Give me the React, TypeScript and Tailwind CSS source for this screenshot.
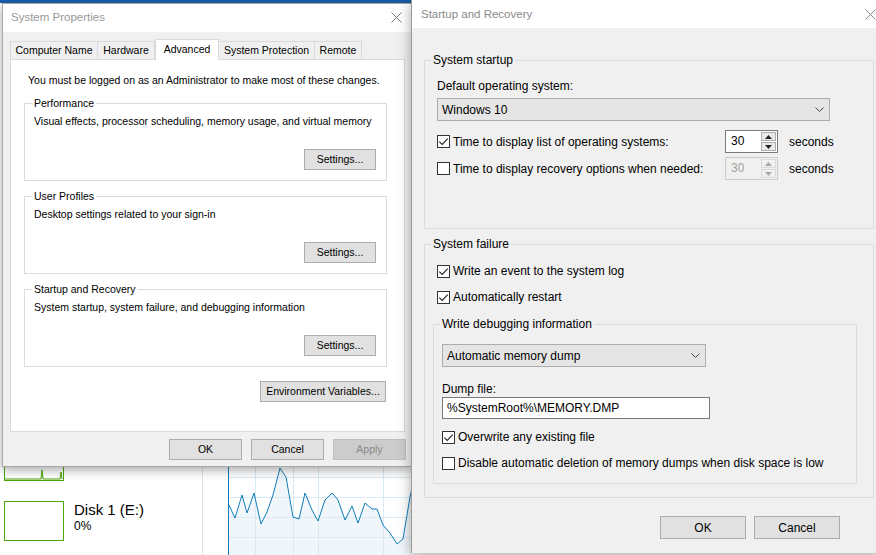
import type { ReactNode } from 'react'

function XIcon({ color = '#777777' }: { color?: string }) {
  return (
    <svg width="11" height="11" viewBox="0 0 11 11">
      <path d="M0.5 0.5 10.5 10.5 M10.5 0.5 0.5 10.5" stroke={color} strokeWidth="1" fill="none" />
    </svg>
  )
}

function Chevron() {
  return (
    <svg width="9" height="5" viewBox="0 0 9 5">
      <path d="M0.5 0.5 4.5 4.5 8.5 0.5" stroke="#444444" strokeWidth="1" fill="none" />
    </svg>
  )
}

function Btn({
  children,
  className = '',
  disabled = false,
}: {
  children: ReactNode
  className?: string
  disabled?: boolean
}) {
  return (
    <button
      type="button"
      className={`flex items-center justify-center border ${
        disabled ? 'border-[#bfbfbf] bg-[#cccccc] text-[#8a8a8a]' : 'border-[#adadad] bg-[#e1e1e1] text-black'
      } ${className}`}
    >
      {children}
    </button>
  )
}

function Check({ checked }: { checked: boolean }) {
  return (
    <span className="flex h-[13px] w-[13px] shrink-0 items-center justify-center border border-[#333333] bg-white">
      {checked && (
        <svg width="11" height="11" viewBox="0 0 11 11">
          <path d="M1.3 5.6 4.2 8.5 9.7 2.6" fill="none" stroke="#222222" strokeWidth="1.1" />
        </svg>
      )}
    </span>
  )
}

function CheckRow({ checked, children, className = '' }: { checked: boolean; children: ReactNode; className?: string }) {
  return (
    <div className={`flex h-[16px] items-center gap-[3px] ${className}`}>
      <Check checked={checked} />
      <span>{children}</span>
    </div>
  )
}

function SpinArrow({ up, color }: { up: boolean; color: string }) {
  return (
    <svg width="7" height="4" viewBox="0 0 7 4">
      <path d={up ? 'M0 4 3.5 0 7 4Z' : 'M0 0 3.5 4 7 0Z'} fill={color} />
    </svg>
  )
}

function Spinner({ disabled = false }: { disabled?: boolean }) {
  const half = disabled
    ? 'border-[#d9d9d9] bg-[#f0f0f0]'
    : 'border-[#adadad] bg-[#e9e9e9]'
  const arrow = disabled ? '#a8a8a8' : '#222222'
  return (
    <div
      className={`flex h-[23px] w-[53px] border ${
        disabled ? 'border-[#cccccc] bg-[#f0f0f0] text-[#a0a0a0]' : 'border-[#7a7a7a] bg-white text-black'
      }`}
    >
      <span className="flex-1 pl-[5px] leading-[21px]">30</span>
      <div className="flex w-[17px] flex-col gap-px p-px">
        <div className={`flex flex-1 items-center justify-center border ${half}`}>
          <SpinArrow up color={arrow} />
        </div>
        <div className={`flex flex-1 items-center justify-center border ${half}`}>
          <SpinArrow up={false} color={arrow} />
        </div>
      </div>
    </div>
  )
}

function Select({ value, className = '' }: { value: string; className?: string }) {
  return (
    <div className={`flex h-[23px] items-center justify-between border border-[#adadad] bg-[#e5e5e5] pl-[4px] pr-[5px] ${className}`}>
      <span>{value}</span>
      <Chevron />
    </div>
  )
}

function LeftGroup({ title, desc, className = '' }: { title: string; desc: string; className?: string }) {
  return (
    <fieldset className={`h-[84px] w-[363px] border border-[#dcdcdc] pl-[9px] pr-[10px] ${className}`}>
      <legend className="-ml-[2px] px-[2px]">{title}</legend>
      <div className="mt-[5px]">{desc}</div>
      <div className="mt-[21px] flex justify-end">
        <Btn className="h-[21px] w-[72px]">Settings...</Btn>
      </div>
    </fieldset>
  )
}

const TABS = [
  { label: 'Computer Name', w: 'w-[88px]' },
  { label: 'Hardware', w: 'w-[57px]' },
  { label: 'Advanced', w: 'w-[64px]', active: true },
  { label: 'System Protection', w: 'w-[96px]' },
  { label: 'Remote', w: 'w-[47px]' },
]

function SystemProperties() {
  return (
    <div className="absolute left-[2px] top-[3px] flex h-[464px] w-[410px] flex-col border border-[#a8a8a8] bg-[#f0f0f0] text-[10.5px] leading-[13px] text-black shadow-[0_3px_10px_rgba(0,0,0,0.35)]">
      <div className="flex h-[28px] shrink-0 items-center justify-between bg-white pb-[2px] pl-[8px] pr-[9px]">
        <span className="text-[11.5px] text-[#999999]">System Properties</span>
        <XIcon />
      </div>
      <div className="px-[7px] pt-[7px]">
        <div className="flex h-[20px] items-end">
          {TABS.map((t, i) =>
            t.active ? (
              <div
                key={t.label}
                className={`relative z-10 -mb-px flex h-[21px] items-center justify-center border border-b-0 border-[#d9d9d9] bg-white pb-[2px] ${t.w}`}
              >
                {t.label}
              </div>
            ) : (
              <div
                key={t.label}
                className={`flex h-[18px] items-center justify-center border-t border-r border-[#d9d9d9] bg-[#f0f0f0] ${
                  i === 0 ? 'border-l' : ''
                } ${t.w}`}
              >
                {t.label}
              </div>
            ),
          )}
        </div>
        <div className="h-[373px] w-[395px] border border-[#d9d9d9] bg-white px-[13px] pt-[14px]">
          <div className="pl-[4px]">You must be logged on as an Administrator to make most of these changes.</div>
          <LeftGroup
            className="mt-[10px]"
            title="Performance"
            desc="Visual effects, processor scheduling, memory usage, and virtual memory"
          />
          <LeftGroup className="mt-[9px]" title="User Profiles" desc="Desktop settings related to your sign-in" />
          <LeftGroup
            className="mt-[9px]"
            title="Startup and Recovery"
            desc="System startup, system failure, and debugging information"
          />
          <div className="mt-[14px] flex w-[363px] justify-end pr-[1px]">
            <Btn className="h-[21px] w-[126px]">Environment Variables...</Btn>
          </div>
        </div>
        <div className="-mr-[2px] mt-[7px] flex justify-end gap-[9px]">
          <Btn className="h-[21px] w-[73px]">OK</Btn>
          <Btn className="h-[21px] w-[73px]">Cancel</Btn>
          <Btn className="h-[21px] w-[73px]" disabled>
            Apply
          </Btn>
        </div>
      </div>
    </div>
  )
}

function StartupAndRecovery() {
  return (
    <div className="absolute left-[411px] top-0 flex h-[553px] w-[470px] flex-col border-l border-[#9a9a9a] bg-[#f0f0f0] text-[12px] leading-[16px] text-black shadow-[0_3px_12px_rgba(0,0,0,0.35)]">
      <div className="flex h-[28px] shrink-0 items-center justify-between bg-white pl-[9px] pr-[5px]">
        <span className="text-[11.5px] text-[#8a8a8a]">Startup and Recovery</span>
        <XIcon color="#888888" />
      </div>
      <div className="pl-[12px]">
        <fieldset className="mt-[24px] h-[177px] w-[450px] border border-[#dcdcdc] pl-[12px]">
          <legend className="-ml-[6px] px-[2px]">System startup</legend>
          <div className="mt-[10px]">Default operating system:</div>
          <Select className="mt-[4px] w-[393px]" value="Windows 10" />
          <div className="mt-[9px] flex h-[23px] items-center">
            <div className="flex w-[288px] items-center gap-[3px]">
              <Check checked />
              <span>Time to display list of operating systems:</span>
            </div>
            <Spinner />
            <span className="ml-[11px]">seconds</span>
          </div>
          <div className="mt-[4px] flex h-[23px] items-center">
            <div className="flex w-[288px] items-center gap-[3px]">
              <Check checked={false} />
              <span>Time to display recovery options when needed:</span>
            </div>
            <Spinner disabled />
            <span className="ml-[11px]">seconds</span>
          </div>
        </fieldset>

        <fieldset className="mt-[7px] h-[262px] w-[450px] border border-[#dcdcdc] pl-[12px]">
          <legend className="-ml-[6px] px-[2px]">System failure</legend>
          <CheckRow className="mt-[11px]" checked>
            Write an event to the system log
          </CheckRow>
          <CheckRow className="mt-[10px]" checked>
            Automatically restart
          </CheckRow>
          <fieldset className="mt-[11px] -ml-[4px] h-[168px] w-[424px] border border-[#dcdcdc] pl-[8px]">
            <legend className="-ml-[2px] px-[2px]">Write debugging information</legend>
            <Select className="mt-[12px] w-[264px]" value="Automatic memory dump" />
            <div className="mt-[14px]">Dump file:</div>
            <div className="flex h-[22px] w-[268px] items-center border border-[#7a7a7a] bg-white pl-[4px]">
              %SystemRoot%\MEMORY.DMP
            </div>
            <CheckRow className="mt-[10px]" checked>
              Overwrite any existing file
            </CheckRow>
            <CheckRow className="mt-[10px]" checked={false}>
              Disable automatic deletion of memory dumps when disk space is low
            </CheckRow>
          </fieldset>
        </fieldset>

        <div className="mt-[18px] flex w-[450px] justify-end gap-[8px] pr-[34px]">
          <Btn className="h-[23px] w-[86px]">OK</Btn>
          <Btn className="h-[23px] w-[86px]">Cancel</Btn>
        </div>
      </div>
    </div>
  )
}

const GRAPH_PTS: [number, number][] = [
  [1, 65], [7, 78], [14, 55], [19, 73], [26, 53], [33, 84], [39, 72], [45, 55], [52, 28], [58, 37],
  [65, 77], [71, 79], [77, 53], [84, 70], [90, 81], [97, 60], [104, 53], [110, 60], [117, 80], [124, 66],
  [130, 83], [137, 63], [144, 69], [149, 69], [155, 85], [162, 93], [169, 104], [175, 99], [182, 57], [188, 30],
]

function DiskGraph() {
  const line = GRAPH_PTS.map(([x, y]) => `${x},${y}`).join(' ')
  return (
    <svg width="200" height="115" viewBox="0 0 200 115">
      <polygon points={`${line} 188,115 1,115`} fill="#f1f6fa" />
      {[27, 65, 90, 155].map((x) => (
        <line key={x} x1={x + 0.5} y1="0" x2={x + 0.5} y2="115" stroke="#d9eaf4" />
      ))}
      {[17, 37, 57, 77, 97].map((y) => (
        <line key={y} x1="0" y1={y + 0.5} x2="200" y2={y + 0.5} stroke="#d9eaf4" />
      ))}
      <polyline points={line} fill="none" stroke="#117dbb" strokeWidth="1" />
      <line x1="0.5" y1="0" x2="0.5" y2="115" stroke="#117dbb" />
    </svg>
  )
}

function TaskManagerBehind() {
  return (
    <div className="absolute inset-0 flex bg-white font-['Segoe_UI','Liberation_Sans',Arial,sans-serif] text-black">
      <div className="flex w-[203px] flex-col gap-[20px] border-r border-[#e3e3e3] pl-[4px] pt-[441px]">
        <div className="flex gap-[10px]">
          <div className="h-[40px] w-[60px] border border-[#4da60c]">
            <svg width="58" height="38" viewBox="0 0 58 38">
              <path d="M0 37 L36 37 L37 28 L38 37 L55 37 L56 30 L57 37" fill="#e8f4e1" stroke="#4da60c" strokeWidth="1" />
            </svg>
          </div>
          <div className="-mt-[4px] flex flex-col">
            <span className="text-[15px] leading-[18px]">Disk 0 (C:)</span>
            <span className="text-[12px] leading-[14px]">0%</span>
          </div>
        </div>
        <div className="flex gap-[10px]">
          <div className="h-[40px] w-[60px] border border-[#4da60c]" />
          <div className="flex flex-col">
            <span className="text-[15px] leading-[18px]">Disk 1 (E:)</span>
            <span className="text-[12px] leading-[14px]">0%</span>
          </div>
        </div>
      </div>
      <div className="flex-1 pl-[25px] pt-[440px]">
        <DiskGraph />
      </div>
    </div>
  )
}

export default function App() {
  return (
    <div className="relative h-[555px] w-[876px] overflow-hidden bg-white font-['Liberation_Sans',Arial,sans-serif]">
      <TaskManagerBehind />
      <div className="absolute left-0 right-0 top-0 h-[3px] bg-[#1b5fae]" />
      <SystemProperties />
      <StartupAndRecovery />
    </div>
  )
}
